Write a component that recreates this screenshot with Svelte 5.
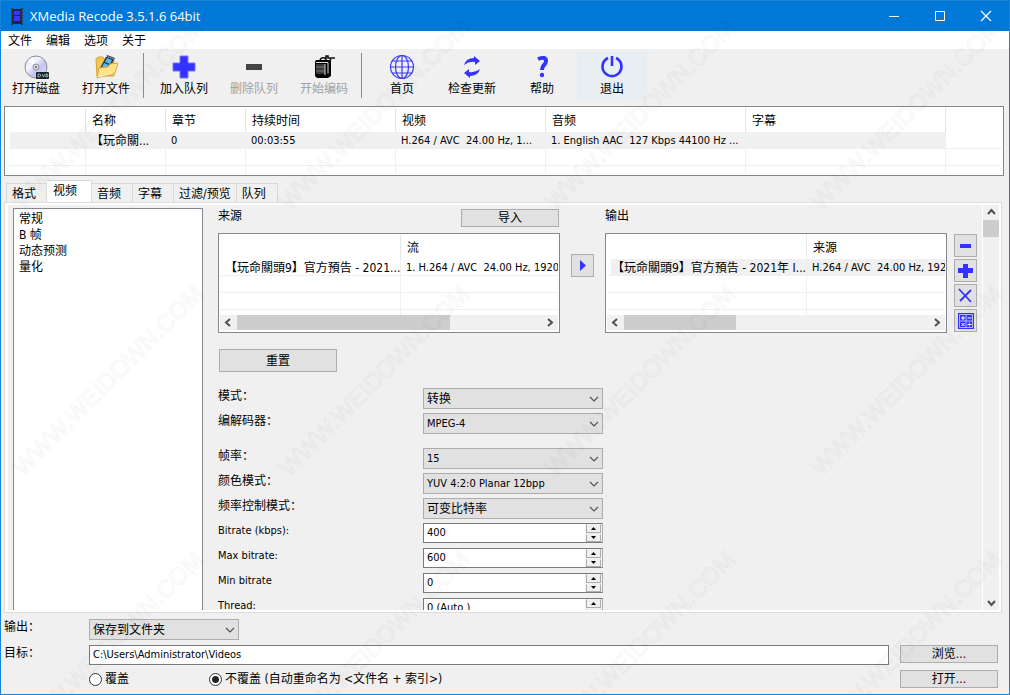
<script lang="ts">
	const menus = ['文件', '编辑', '选项', '关于'];

	const toolbar = [
		[
			{ icon: 'disc', label: '打开磁盘' },
			{ icon: 'folder', label: '打开文件' }
		],
		[
			{ icon: 'add', label: '加入队列' },
			{ icon: 'remove', label: '删除队列', disabled: true },
			{ icon: 'encode', label: '开始编码', disabled: true }
		],
		[
			{ icon: 'globe', label: '首页' },
			{ icon: 'update', label: '检查更新' },
			{ icon: 'help', label: '帮助' },
			{ icon: 'power', label: '退出', hot: true }
		]
	];

	const jobColumns = ['', '名称', '章节', '持续时间', '视频', '音频', '字幕', ''];
	const job = [
		'',
		'【玩命關...',
		'0',
		'00:03:55',
		'H.264 / AVC  24.00 Hz, 1...',
		'1. English AAC  127 Kbps 44100 Hz ...',
		'',
		''
	];

	const tabs = ['格式', '视频', '音频', '字幕', '过滤/预览', '队列'];
	let activeTab = $state('视频');

	const pages = ['常规', 'B 帧', '动态预测', '量化'];

	const fields = [
		{ id: 'mode', label: '模式：', kind: 'select', value: '转换' },
		{ id: 'codec', label: '编解码器：', kind: 'select', value: 'MPEG-4', latin: true },
		{ id: 'fps', label: '帧率：', kind: 'select', value: '15', latin: true, gap: true },
		{ id: 'color', label: '颜色模式：', kind: 'select', value: 'YUV 4:2:0 Planar 12bpp', latin: true },
		{ id: 'rate', label: '频率控制模式：', kind: 'select', value: '可变比特率' },
		{ id: 'bitrate', label: 'Bitrate (kbps):', kind: 'spin', value: '400', latin: true },
		{ id: 'maxrate', label: 'Max bitrate:', kind: 'spin', value: '600', latin: true },
		{ id: 'minrate', label: 'Min bitrate', kind: 'spin', value: '0', latin: true },
		{ id: 'thread', label: 'Thread:', kind: 'spin', value: '0 (Auto )', latin: true }
	];

	let overwrite = $state('rename');

	// the job list shows text in two sizes, 11px latin next to 12px chinese
	function isLatin(text: string) {
		return /^[\x20-\x7e]*$/.test(text);
	}
</script>

{#snippet icon(name)}
	<svg class="icon" width="26" height="26" viewBox="0 0 26 26" aria-hidden="true">
		{#if name === 'disc'}
			<defs>
				<linearGradient id="disc-face" x1="0" y1="0" x2="1" y2="1">
					<stop offset="0" stop-color="#d4d4e2" />
					<stop offset="0.35" stop-color="#f6f6ff" />
					<stop offset="0.6" stop-color="#c3c2f2" />
					<stop offset="1" stop-color="#e6e6f4" />
				</linearGradient>
			</defs>
			<circle cx="13" cy="13" r="11" fill="url(#disc-face)" stroke="#8c8c98" />
			<path d="M13 13L5 6L10 3Z" fill="#fff" opacity="0.8" />
			<circle cx="13" cy="13" r="3" fill="#dcdce4" stroke="#8e8e9c" />
			<circle cx="13" cy="13" r="1" fill="#555" />
			<rect x="13" y="18" width="13" height="7" rx="1" fill="#15252b" />
			<path d="M15 20v3h1.500l1-1v-1l-1-1zM19 20l1.500 3l1.500-3M23 20v3h1l1-1v-1l-1-1z" fill="none" stroke="#c8d8dc" stroke-width="0.800" />
		{:else if name === 'folder'}
			<path d="M3 5l2-2h5l2 3h9v16H4z" fill="#f3c74d" stroke="#d9a03a" />
			<path d="M14 1l8 3l-7 13l-8-3z" fill="#26384a" />
			<path d="M14 4l5 2l-2 4l-5-2zM11 9l5 2l-2 4l-5-2z" fill="#5fb4ec" />
			<path d="M13 2l8 3" stroke="#fff" stroke-dasharray="1 1" />
			<path d="M4 24l2-10l9-1l2-3l8-1l-3 10z" fill="#ffe488" stroke="#dba63a" />
			<path d="M5 23l15-4" stroke="#fff3b8" />
		{:else if name === 'add'}
			<path d="M9 2h8v7h7v8h-7v7H9v-7H2V9h7z" fill="#3333ff" stroke="#7777ee" stroke-width="1" />
		{:else if name === 'remove'}
			<path d="M5 10h16v6H5z" fill="#444" />
		{:else if name === 'encode'}
			<path d="M4 8q0-2 2-2h12q2 0 2 2v14l-3 2H6l-2-2z" />
			<path d="M9 6q2-4 6-1M15 6V2h2v2h7M20 5l-2 3" fill="none" stroke="#111" stroke-width="1.600" />
			<rect x="5" y="10" width="9" height="10" fill="#3a3a3a" />
			<path d="M5 13h9M5 17h9" stroke="#777" />
			<path d="M14 10v11" stroke="#ccc" />
			<path d="M5 8.500h12v11" fill="none" stroke="#ddd" />
		{:else if name === 'globe'}
			<g fill="none" stroke="#3a3af5" stroke-width="1.200">
				<circle cx="13" cy="13" r="11.500" />
				<ellipse cx="13" cy="13" rx="6.500" ry="11.500" />
				<path d="M13 1v24M1 13h24M3 7h20M3 19h20" />
			</g>
		{:else if name === 'update'}
			<g fill="#3333ff">
				<path d="M5 11q2-7 10-7V2l6 5l-5 4V8q-6-1-11 3z" />
				<path d="M21 15q-2 7-10 7v2l-6-5l5-4v3q6 1 11-3z" />
			</g>
		{:else if name === 'help'}
			<path d="M9 5q8-3 8 2q0 2-2 4q-2 2-2 5" fill="none" stroke="#3333ff" stroke-width="4" />
			<circle cx="13" cy="21" r="2.200" fill="#3333ff" />
		{:else if name === 'power'}
			<path d="M9 4a9.500 9.500 0 1 0 8 0" fill="none" stroke="#3333ff" stroke-width="2.600" />
			<path d="M13 2v10" stroke="#3333ff" stroke-width="2.600" />
		{/if}
	</svg>
{/snippet}

{#snippet chevron(d)}
	<svg width="9" height="9" viewBox="0 0 9 9" aria-hidden="true">
		<path {d} fill="none" stroke="#505050" stroke-width="2" />
	</svg>
{/snippet}

{#snippet combo(id, value, latin)}
	<div class="combo">
		<select {id} class:latin>
			<option>{value}</option>
		</select>
		<svg width="10" height="6" viewBox="0 0 10 6" aria-hidden="true">
			<path d="M1 1l4 4l4-4" fill="none" stroke="#555" stroke-width="1.200" />
		</svg>
	</div>
{/snippet}

{#snippet streams(title, name, detail, selected)}
	<div class="streams" class:output={selected}>
		<table>
			<thead>
				<tr><th class="first"></th><th>{title}</th></tr>
			</thead>
			<tbody>
				<tr class:selected><td>{name}</td><td class="latin">{detail}</td></tr>
				<tr><td></td><td></td></tr>
				<tr><td></td><td></td></tr>
				<tr class="rest"><td></td><td></td></tr>
			</tbody>
		</table>
		<div class="hscroll">
			<button aria-label="向左">{@render chevron('M6 1L2 4.500L6 8')}</button>
			<div class="track"><div class="thumb"></div></div>
			<button aria-label="向右">{@render chevron('M3 1L7 4.500L3 8')}</button>
		</div>
	</div>
{/snippet}

<div class="window">
	<header class="titlebar">
		<svg class="app-icon" width="12" height="17" viewBox="0 0 12 17" aria-hidden="true">
			<rect x="1" y="1" width="10" height="15" fill="#20224c" />
			<path d="M3 3h6v4H3zM3 8h6v5H3z" fill="#3838f8" />
			<path d="M1 0v17M11 0v17" stroke="#353642" stroke-width="2" stroke-dasharray="2 1" />
		</svg>
		<h1>XMedia Recode 3.5.1.6 64bit</h1>
		<button class="caption" aria-label="最小化">
			<svg width="12" height="12" viewBox="0 0 12 12"><path d="M1 6.500h10" stroke="#fff" /></svg>
		</button>
		<button class="caption" aria-label="最大化">
			<svg width="12" height="12" viewBox="0 0 12 12"><path d="M1.500 1.500h9v9h-9z" fill="none" stroke="#fff" /></svg>
		</button>
		<button class="caption" aria-label="关闭">
			<svg width="12" height="12" viewBox="0 0 12 12"><path d="M1 1l10 10M11 1L1 11" stroke="#fff" stroke-width="1.200" /></svg>
		</button>
	</header>

	<nav class="menubar">
		{#each menus as menu}
			<button>{menu}</button>
		{/each}
	</nav>

	<div class="toolbar">
		{#each toolbar as group, i}
			{#if i > 0}
				<div class="divider"></div>
			{/if}
			{#each group as item}
				<button class:hot={item.hot} disabled={item.disabled}>
					{@render icon(item.icon)}
					<span>{item.label}</span>
				</button>
			{/each}
		{/each}
	</div>

	<div class="jobs">
		<table>
			<colgroup>
				<col class="w80" /><col class="w80" /><col class="w80" />
				<col class="w150" /><col class="w150" />
				<col class="w200" /><col class="w200" /><col />
			</colgroup>
			<thead>
				<tr>
					{#each jobColumns as column}
						<th>{column}</th>
					{/each}
				</tr>
			</thead>
			<tbody>
				<tr class="selected">
					{#each job as cell}
						<td class:latin={isLatin(cell)}>{cell}</td>
					{/each}
				</tr>
				<tr>
					{#each job as _}<td></td>{/each}
				</tr>
				<tr class="rest">
					{#each job as _}<td></td>{/each}
				</tr>
			</tbody>
		</table>
	</div>

	<div class="tabs" role="tablist">
		{#each tabs as tab}
			<button role="tab" aria-selected={tab === activeTab} class:active={tab === activeTab} onclick={() => (activeTab = tab)}>
				{tab}
			</button>
		{/each}
	</div>

	<main class="panel">
		<ul class="pages">
			{#each pages as page}
				<li>{page}</li>
			{/each}
		</ul>

		<div class="content">
			<div class="routing">
				<section>
					<div class="head">
						<h2>来源</h2>
						<button class="push">导入</button>
					</div>
					{@render streams('流', '【玩命關頭9】官方預告 - 2021...', '1. H.264 / AVC  24.00 Hz, 1920', false)}
				</section>
				<button class="square send" aria-label="添加到输出">
					<svg width="15" height="15" viewBox="0 0 15 15"><path d="M5 2l6 5.500l-6 5.500z" fill="#3333ff" /></svg>
				</button>
				<section>
					<div class="head">
						<h2>输出</h2>
					</div>
					{@render streams('来源', '【玩命關頭9】官方預告 - 2021年 I...', 'H.264 / AVC  24.00 Hz, 192', true)}
				</section>
				<div class="side">
					<button class="square" aria-label="删除">
						<svg width="17" height="17" viewBox="0 0 17 17"><path d="M3 7h11v4H3z" fill="#3333ff" /></svg>
					</button>
					<button class="square" aria-label="添加">
						<svg width="17" height="17" viewBox="0 0 17 17"><path d="M6 2h5v4h5v5h-5v5H6v-5H1V6h5z" fill="#3333ff" /></svg>
					</button>
					<button class="square" aria-label="清除">
						<svg width="17" height="17" viewBox="0 0 17 17"><path d="M2 2l12 13M14 3L3 14" stroke="#3333ff" stroke-width="1.800" /></svg>
					</button>
					<button class="square" aria-label="计算器">
						<svg width="17" height="17" viewBox="0 0 17 17">
							<path d="M1 1h16v16H1z" fill="#3333ff" />
							<path d="M2.500 2.500h13v13h-13zM9 3v12M3 9h12" fill="none" stroke="#dcdcff" stroke-width="0.800" />
							<path d="M4 6h4M6 4v4M10.500 6h4M4.500 11l3 3M7.500 11l-3 3M10.500 12.500h4M12.500 10.500v1M12.500 13.500v1" stroke="#fff" />
						</svg>
					</button>
				</div>
			</div>

			<button class="push reset">重置</button>

			<form>
				{#each fields as field}
					<div class="field" class:gap={field.gap}>
						<label for={field.id} class:latin={isLatin(field.label)}>{field.label}</label>
						{#if field.kind === 'select'}
							{@render combo(field.id, field.value, field.latin)}
						{:else}
							<div class="spin">
								<input id={field.id} type="text" class="latin" value={field.value} />
								<div class="arrows">
									<button type="button" aria-label="增加">
										<svg width="5" height="3" viewBox="0 0 5 3"><path d="M0 3h5L2.500 0z" /></svg>
									</button>
									<button type="button" aria-label="减少">
										<svg width="5" height="3" viewBox="0 0 5 3"><path d="M0 0h5L2.500 3z" /></svg>
									</button>
								</div>
							</div>
						{/if}
					</div>
				{/each}
			</form>
		</div>

		<div class="vscroll">
			<button aria-label="向上">{@render chevron('M1 6L4.500 2L8 6')}</button>
			<div class="track"><div class="thumb"></div></div>
			<button aria-label="向下">{@render chevron('M1 3L4.500 7L8 3')}</button>
		</div>
	</main>

	<footer class="target">
		<label for="output">输出：</label>
		<div class="output-kind">{@render combo('output', '保存到文件夹', false)}</div>
		<label for="folder">目标：</label>
		<input id="folder" type="text" class="path latin" value={'C:\\Users\\Administrator\\Videos'} />
		<button class="push">浏览...</button>
		<div class="choices">
			<label><input type="radio" value="overwrite" bind:group={overwrite} />覆盖</label>
			<label><input type="radio" value="rename" bind:group={overwrite} />不覆盖 (自动重命名为 &lt;文件名 + 索引&gt;)</label>
		</div>
		<button class="push">打开...</button>
	</footer>

	<svg class="watermark" aria-hidden="true">
		<defs>
			<pattern id="mark" width="266" height="266" patternUnits="userSpaceOnUse">
				<text x="22" y="210" transform="rotate(-45 22 210)">WWW.WEIDOWN.COM</text>
			</pattern>
		</defs>
		<rect width="100%" height="100%" fill="url(#mark)" />
	</svg>
</div>

<style>
	:global(body) {
		margin: 0;
	}

	.window {
		position: relative;
		display: flex;
		flex-direction: column;
		box-sizing: border-box;
		height: 100vh;
		border: 1px solid #1883d7;
		background: #f0f0f0;
		color: #000;
		font: 12px/16px 'DejaVu Sans Condensed', 'Noto Sans CJK SC', sans-serif;
		overflow: hidden;
	}

	.window * {
		box-sizing: border-box;
	}

	button,
	input,
	select {
		margin: 0;
		padding: 0;
		border: 0;
		border-radius: 0;
		background: none;
		color: inherit;
		font: inherit;
	}

	h1,
	h2 {
		margin: 0;
		font-weight: normal;
	}

	table {
		width: 100%;
		border-collapse: separate;
		border-spacing: 0;
		table-layout: fixed;
	}

	.latin {
		font-size: 11px;
	}

	.titlebar {
		display: flex;
		flex: none;
		align-items: center;
		height: 30px;
		padding-left: 10px;
		background: #0078d7;
		color: #fff;
	}

	.titlebar h1 {
		flex: 1;
		margin-left: 7px;
		font-family: 'Open Sans', sans-serif;
		font-size: 13px;
	}

	.caption {
		display: flex;
		align-items: center;
		justify-content: center;
		width: 46px;
		height: 30px;
	}

	.menubar {
		display: flex;
		flex: none;
		height: 18px;
		background: #fff;
	}

	.menubar button {
		padding: 2px 7px 0;
	}

	.toolbar {
		display: flex;
		flex: none;
		padding: 2px 0 6px;
	}

	.toolbar button {
		display: flex;
		flex-direction: column;
		align-items: center;
		width: 70px;
		height: 49px;
		padding-top: 3px;
	}

	.toolbar button span {
		line-height: 18px;
	}

	.toolbar button:disabled {
		color: #a0a0a0;
	}

	.toolbar .hot {
		background: #e9eef2;
	}

	.icon {
		flex: none;
	}

	.divider {
		width: 8px;
		margin: 2px 0;
		background: linear-gradient(#8d8d8d, #8d8d8d) 2px 0 / 1px 100% no-repeat;
	}

	.jobs,
	.streams {
		padding: 1px;
		border: 1px solid #828790;
		background: #fff;
		overflow: hidden;
	}

	.jobs {
		flex: none;
		height: 70px;
		margin: 0 5px 0 3px;
	}

	th {
		height: 24px;
		padding: 2px 0 0 6px;
		border-right: 1px solid #e5e5e5;
		font-weight: normal;
		text-align: left;
	}

	td {
		height: 17px;
		padding: 2px 0 0 5px;
		border-right: 1px solid #f0f0f0;
		border-bottom: 1px solid #f0f0f0;
		line-height: 14px;
		white-space: pre;
		overflow: hidden;
	}

	th:last-child,
	td:last-child {
		border-right: 0;
	}

	.selected td {
		background: #f0f0f0;
	}

	.selected td:first-child {
		background: linear-gradient(to right, #fff 4px, #f0f0f0 4px);
	}

	.jobs .selected td:last-child {
		background: none;
	}

	.rest td {
		height: 8px;
		padding: 0;
		border-bottom: 0;
	}

	.w80 {
		width: 80px;
	}

	.w150 {
		width: 150px;
	}

	.w200 {
		width: 200px;
	}

	.tabs {
		display: flex;
		flex: none;
		align-items: flex-end;
		height: 26px;
		padding-left: 5px;
	}

	.tabs button {
		min-width: 41px;
		height: 19px;
		padding: 1px 5px 0;
		border: 1px solid #d9d9d9;
		border-width: 1px 1px 0 0;
		text-align: left;
	}

	.tabs button:first-child {
		border-left-width: 1px;
	}

	.tabs .active {
		min-width: 45px;
		height: 22px;
		padding: 0 6px 1px;
		background: #fff;
	}

	.panel {
		display: flex;
		flex: 1;
		min-height: 0;
		margin: 0 7px 0 3px;
		border: 1px solid #dcdcdc;
		box-shadow: inset 3px 2px #fff, inset -2px -2px #fff;
		padding: 2px 2px 2px 3px;
	}

	.pages {
		flex: none;
		width: 190px;
		margin: 3px 0 0 5px;
		padding: 2px 5px;
		border: 1px solid #828790;
		border-bottom: 0;
		background: #fff;
		list-style: none;
	}

	.content {
		flex: 1;
		min-width: 0;
		padding: 3px 5px 0 15px;
		overflow: hidden;
	}

	.routing {
		display: flex;
	}

	.routing section {
		flex: 1;
		min-width: 0;
	}

	.head {
		display: flex;
		justify-content: space-between;
		height: 25px;
		padding: 1px 1px 0 0;
	}

	.head h2 {
		font-size: 12px;
		line-height: 14px;
	}

	.push {
		width: 98px;
		height: 18px;
		border: 1px solid #adadad;
		background: #e1e1e1;
		line-height: 16px;
	}

	.push.reset {
		display: block;
		width: 118px;
		height: 23px;
		margin: 16px 0 16px 1px;
		padding-top: 1px;
	}

	.streams {
		height: 100px;
	}

	.streams .first {
		width: 181px;
	}

	.streams.output .first {
		width: 200px;
	}

	.streams .rest td {
		height: 5px;
	}

	.hscroll,
	.vscroll {
		display: flex;
		background: #f0f0f0;
	}

	.hscroll {
		height: 15px;
	}

	.hscroll button {
		display: flex;
		align-items: center;
		justify-content: center;
		width: 17px;
	}

	.track {
		flex: 1;
	}

	.hscroll .thumb {
		width: 70%;
		height: 100%;
		background: #cdcdcd;
	}

	.output .hscroll .thumb {
		width: 37%;
	}

	.square {
		display: flex;
		align-items: center;
		justify-content: center;
		width: 23px;
		height: 23px;
		border: 1px solid #adadad;
		background: #e1e1e1;
	}

	.send {
		margin: 46px 11px 0;
	}

	.side {
		display: flex;
		flex-direction: column;
		gap: 2px;
		margin: 26px 0 0 7px;
	}

	.field {
		display: flex;
		height: 25px;
	}

	.field.gap {
		margin-top: 10px;
	}

	.field label {
		width: 205px;
		line-height: 16px;
	}

	.combo {
		position: relative;
		width: 180px;
		height: 21px;
	}

	.combo select {
		width: 100%;
		height: 100%;
		padding: 1px 20px 0 3px;
		border: 1px solid #adadad;
		background: #e1e1e1;
		appearance: none;
	}

	.combo svg {
		position: absolute;
		top: 8px;
		right: 4px;
		pointer-events: none;
	}

	.spin {
		display: flex;
		width: 180px;
		height: 20px;
		border: 1px solid #7a7a7a;
		border-right-color: #adadad;
		background: #fff;
	}

	.spin input {
		flex: 1;
		min-width: 0;
		padding-left: 3px;
	}

	.arrows {
		display: flex;
		flex-direction: column;
		gap: 1px;
		width: 17px;
		padding: 0 1px;
		background: #f0f0f0;
	}

	.arrows button {
		display: flex;
		flex: 1;
		align-items: center;
		justify-content: center;
		border: 1px solid #adadad;
		border-top-color: #f0f0f0;
	}

	.vscroll {
		flex-direction: column;
		width: 17px;
		border-left: 1px solid #fff;
	}

	.vscroll button {
		display: flex;
		align-items: center;
		justify-content: center;
		height: 15px;
	}

	.vscroll .thumb {
		height: 17px;
		background: #cdcdcd;
	}

	.target {
		display: grid;
		flex: none;
		grid-template-columns: 74px 1fr 98px;
		grid-template-rows: 21px 20px 18px;
		gap: 5px 11px;
		height: 81px;
		padding: 6px 11px 0 3px;
	}

	.target > label {
		line-height: 16px;
		white-space: nowrap;
	}

	.output-kind {
		grid-column: 2 / 4;
	}

	.output-kind .combo {
		width: 150px;
	}

	.path {
		width: 100%;
		padding-left: 3px;
		border: 1px solid #7a7a7a;
		background: #fff;
	}

	.choices {
		display: flex;
		grid-column: 2;
	}

	.choices label {
		display: flex;
		align-items: center;
		gap: 3px;
		min-width: 120px;
	}

	.choices input {
		width: 13px;
		height: 13px;
		border: 1px solid #333;
		border-radius: 50%;
		background: #fff;
		appearance: none;
	}

	.choices input:checked {
		background: radial-gradient(circle, #222 3px, #fff 4px);
	}

	.watermark {
		position: absolute;
		inset: 0;
		width: 100%;
		height: 100%;
		pointer-events: none;
	}

	.watermark text {
		fill: none;
		stroke: rgba(0, 0, 0, 0.04);
		stroke-width: 1px;
		font: 24px 'Liberation Sans', sans-serif;
	}
</style>
